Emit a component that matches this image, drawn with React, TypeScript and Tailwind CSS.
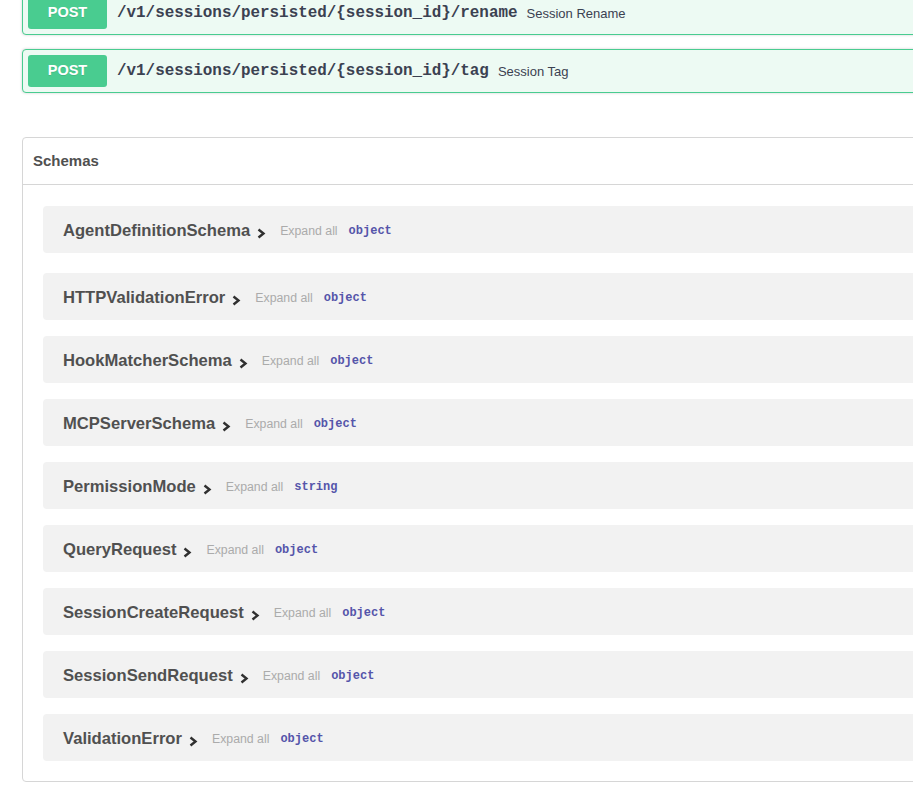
import React from "react";

type Endpoint = { method: string; path: string; summary: string };

const endpoints: Endpoint[] = [
  { method: "POST", path: "/v1/sessions/persisted/{session_id}/rename", summary: "Session Rename" },
  { method: "POST", path: "/v1/sessions/persisted/{session_id}/tag", summary: "Session Tag" },
];

const schemas: { name: string; type: string }[] = [
  { name: "AgentDefinitionSchema", type: "object" },
  { name: "HTTPValidationError", type: "object" },
  { name: "HookMatcherSchema", type: "object" },
  { name: "MCPServerSchema", type: "object" },
  { name: "PermissionMode", type: "string" },
  { name: "QueryRequest", type: "object" },
  { name: "SessionCreateRequest", type: "object" },
  { name: "SessionSendRequest", type: "object" },
  { name: "ValidationError", type: "object" },
];

const sans = "font-['Liberation_Sans',Arial,sans-serif]";
const mono = "font-['Liberation_Mono','DejaVu_Sans_Mono',monospace]";

function Chevron() {
  return (
    <svg width="9" height="11" viewBox="0 0 9 11" className="mt-[5px] text-[#303030]">
      <path d="M1.5 1.5 L6.5 5.5 L1.5 9.5" fill="none" stroke="currentColor" strokeWidth="2.4" />
    </svg>
  );
}

function Opblock({ ep }: { ep: Endpoint }) {
  return (
    <div className="mb-[14px] flex h-[44px] items-center rounded-[4px] border border-[#49cc90] bg-[#edfaf3] px-[5px] shadow-[0_0_3px_rgba(0,0,0,0.19)]">
      <span
        className={`${sans} flex h-[32px] w-[79px] items-center justify-center rounded-[3px] bg-[#49cc90] text-[14.5px] font-bold text-white [text-shadow:0_1px_0_rgba(0,0,0,0.1)]`}
      >
        {ep.method}
      </span>
      <span className={`${mono} ml-[10px] pt-[1px] text-[15.9px] font-bold text-[#3b4151]`}>{ep.path}</span>
      <span className={`${sans} ml-[9px] pt-[1px] text-[13px] text-[#3b4151]`}>{ep.summary}</span>
    </div>
  );
}

function SchemaRow({ name, type, first }: { name: string; type: string; first: boolean }) {
  return (
    <div
      className={`${first ? "" : "mt-[16px]"} flex h-[47px] items-center rounded-[4px] bg-[#f2f2f2] px-[20px] pt-[3px]`}
    >
      <span className={`${sans} text-[16.6px] font-bold text-[#505050]`}>{name}</span>
      <span className="ml-[7px] flex items-center">
        <Chevron />
      </span>
      <span className={`${sans} ml-[14px] text-[12.3px] text-[#ababab]`}>Expand all</span>
      <span className={`${mono} ml-[11px] text-[12px] font-bold text-[#5555aa]`}>{type}</span>
    </div>
  );
}

export default function App() {
  return (
    <div className="h-[790px] w-full overflow-hidden bg-white">
      <div className="-mt-[9px] w-[1000px] pl-[22px]">
        {endpoints.map((ep) => (
          <Opblock key={ep.path} ep={ep} />
        ))}

        <section className="mt-[44px] rounded-[4px] border border-[#d6d6d6]">
          <div className="flex h-[47px] items-center border-b border-[#d6d6d6] px-[10px]">
            <h4 className={`${sans} text-[15px] font-bold text-[#505050]`}>Schemas</h4>
          </div>
          <div className="pb-[20px] pl-[20px] pt-[21px]">
            {schemas.map((s, i) => (
              <div key={s.name} className={i === 1 ? "pt-[4px]" : ""}>
                <SchemaRow name={s.name} type={s.type} first={i === 0} />
              </div>
            ))}
          </div>
        </section>
      </div>
    </div>
  );
}
